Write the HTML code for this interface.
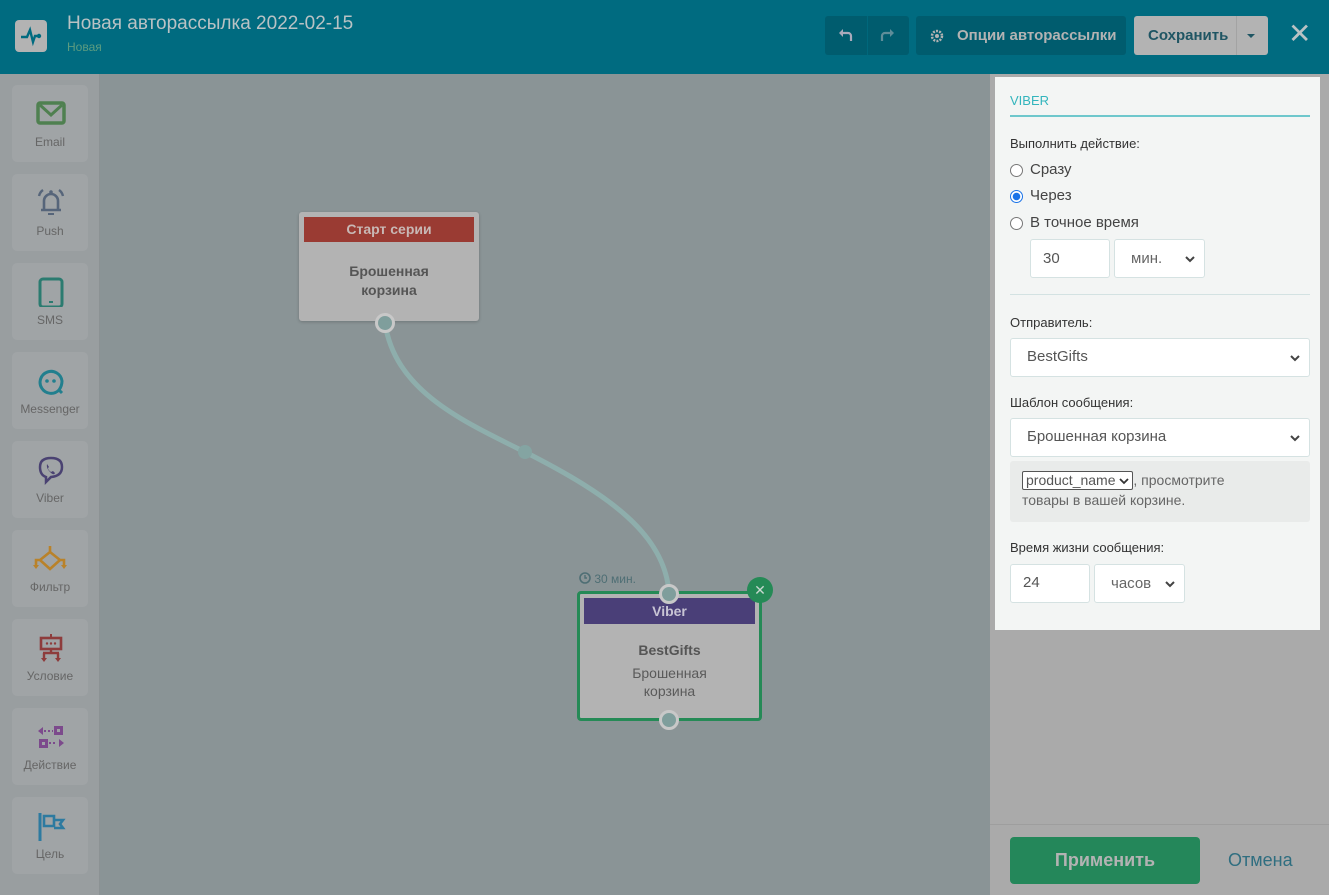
<!DOCTYPE html>
<html><head><meta charset="utf-8"><style>
*{box-sizing:border-box;margin:0;padding:0}
body{width:1329px;height:895px;overflow:hidden;font-family:"Liberation Sans","DejaVu Sans",sans-serif;background:#8a9496;position:relative}
.hdr{position:absolute;left:0;top:0;width:1329px;height:74px;background:#006b80}
.abs{position:absolute}
.tile{position:absolute;left:12px;width:76px;height:77px;background:#a0a4a6;border-radius:5px;text-align:center;font-size:12px;color:#666}
.tile svg{position:absolute;left:24px;top:14px}
.tile span{position:absolute;left:0;right:0;top:50px}
.lbl{position:absolute;left:1010px;font-size:13px;color:#333}
.radio{position:absolute;left:1010px;width:13px;height:13px;border:1px solid #777;border-radius:50%;background:#fff}
.rt{position:absolute;left:1030px;font-size:15px;color:#444}
.inp{position:absolute;background:#fff;border:1px solid #d5e2e2;border-radius:3px;font-size:15px;color:#555}
.chev{position:absolute;top:50%;margin-top:-4px}
</style></head><body>
<div class="hdr"></div>
<div class="abs" style="left:15px;top:20px;width:32px;height:32px;background:#b3b3b3;border-radius:4px">
<svg width="32" height="32"><path d="M6 17h6l3-7 3 12 2-6h4" stroke="#006b80" stroke-width="2.4" fill="none"/><circle cx="24" cy="16" r="2.2" fill="#006b80"/></svg></div>
<div class="abs" style="left:67px;top:13px;font-size:19px;color:#b9c2c4">Новая авторассылка 2022-02-15</div>
<div class="abs" style="left:67px;top:40px;font-size:12px;color:#5c9c80">Новая</div>
<div class="abs" style="left:825px;top:16px;width:84px;height:39px;background:#005c6e;border-radius:3px"></div>
<div class="abs" style="left:867px;top:16px;width:1px;height:39px;background:#00687c"></div>
<svg class="abs" style="left:838px;top:27px" width="16" height="16"><path d="M4 6h6a3 3 0 0 1 3 3v5" stroke="#aab" stroke-width="2.2" fill="none"/><path d="M1 6l4-4v8z" fill="#aab"/></svg>
<svg class="abs" style="left:879px;top:27px" width="16" height="16"><path d="M12 6H6a3 3 0 0 0-3 3v5" stroke="#5f8d99" stroke-width="2.2" fill="none"/><path d="M15 6l-4-4v8z" fill="#5f8d99"/></svg>
<div class="abs" style="left:916px;top:16px;width:210px;height:39px;background:#005c6e;border-radius:3px;color:#b3b3b3;font-weight:bold;font-size:15px;line-height:39px;padding-left:41px">Опции авторассылки</div>
<svg class="abs" style="left:929px;top:28px" width="16" height="16"><circle cx="8" cy="8" r="5" stroke="#b3b3b3" stroke-width="2.5" fill="none" stroke-dasharray="2 1.2"/><circle cx="8" cy="8" r="2" fill="#b3b3b3"/></svg>
<div class="abs" style="left:1134px;top:16px;width:134px;height:39px;background:#b3b3b3;border-radius:3px;color:#1f5563;font-weight:bold;font-size:15px;line-height:39px;padding-left:14px">Сохранить</div>
<div class="abs" style="left:1236px;top:16px;width:1px;height:39px;background:#a3a3a3"></div>
<div class="abs" style="left:1247px;top:34px;border:4px solid transparent;border-top:4px solid #1f5563"></div>
<div class="abs" style="left:1288px;top:17px;font-size:28px;color:#b9c2c4;font-weight:bold">✕</div>

<!-- left sidebar -->
<div class="abs" style="left:0;top:74px;width:100px;height:821px;background:#999ea0;border-right:1px solid #8c9294"></div>
<div class="tile" style="top:85px"><svg width="30" height="28"><rect x="2" y="4" width="26" height="20" rx="2" fill="none" stroke="#4f8050" stroke-width="3.5"/><path d="M4 6l11 10 11-10" fill="none" stroke="#4f8050" stroke-width="3"/></svg><span>Email</span></div>
<div class="tile" style="top:174px"><svg width="30" height="28"><path d="M8 22V13a7 7 0 0 1 14 0v9zM5 22h20" fill="none" stroke="#56657a" stroke-width="2.6"/><path d="M3 8q1-4 4-6M27 8q-1-4-4-6" fill="none" stroke="#56657a" stroke-width="2.4"/><circle cx="15" cy="4" r="1.8" fill="#56657a"/><path d="M12 26h6" stroke="#56657a" stroke-width="2"/></svg><span>Push</span></div>
<div class="tile" style="top:263px"><svg width="30" height="30"><rect x="4" y="2" width="22" height="28" rx="3" fill="none" stroke="#2b7b70" stroke-width="3"/><rect x="13" y="24" width="4" height="2" fill="#2b7b70"/></svg><span>SMS</span></div>
<div class="tile" style="top:352px"><svg width="30" height="30"><path d="M23 24A11 11 0 1 1 26 15q0 5-3 9l3 3" fill="none" stroke="#227f8e" stroke-width="3"/><circle cx="11" cy="15" r="1.8" fill="#227f8e"/><circle cx="18" cy="15" r="1.8" fill="#227f8e"/></svg><span>Messenger</span></div>
<div class="tile" style="top:441px"><svg width="30" height="32"><path d="M4 12q0-9 11-9t11 9-11 10l-5 5v-5q-6-2-6-10z" fill="none" stroke="#4a4272" stroke-width="2.5"/><path d="M11 9q-1 4 3 8t5 1l-2-2-2 1q-3-2-3-4l1-1z" fill="#4a4272"/></svg><span>Viber</span></div>
<div class="tile" style="top:530px"><svg width="36" height="30" style="left:20px"><path d="M18 2v6L8 16l10 9 10-9-10-8M8 16H4v6M28 16h4v6" fill="none" stroke="#b9822a" stroke-width="2.6"/><path d="M1 21h6l-3 4zM29 21h6l-3 4z" fill="#b9822a"/></svg><span>Фильтр</span></div>
<div class="tile" style="top:619px"><svg width="30" height="32"><path d="M15 1v4" stroke="#8e3c3c" stroke-width="2"/><rect x="5" y="5" width="20" height="11" fill="none" stroke="#8e3c3c" stroke-width="2.6"/><path d="M15 16v4M7 20h16M8 20v6M22 20v6" stroke="#8e3c3c" stroke-width="2.4" fill="none"/><circle cx="11" cy="10.5" r="1.2" fill="#8e3c3c"/><circle cx="15" cy="10.5" r="1.2" fill="#8e3c3c"/><circle cx="19" cy="10.5" r="1.2" fill="#8e3c3c"/><path d="M5 25h6l-3 4zM19 25h6l-3 4z" fill="#8e3c3c"/></svg><span>Условие</span></div>
<div class="tile" style="top:708px"><svg width="30" height="30"><path d="M2 9l5-4v8z" fill="#7c4a8c"/><rect x="18" y="4" width="9" height="9" fill="#7c4a8c"/><rect x="21" y="7" width="3" height="3" fill="#a0a4a6"/><rect x="3" y="17" width="9" height="9" fill="#7c4a8c"/><rect x="6" y="20" width="3" height="3" fill="#a0a4a6"/><path d="M28 21l-5-4v8z" fill="#7c4a8c"/><path d="M8 9h2M12 9h2M16 9h1M13 21h2M17 21h2" stroke="#7c4a8c" stroke-width="2"/></svg><span>Действие</span></div>
<div class="tile" style="top:797px"><svg width="30" height="30"><path d="M4 2v28" stroke="#2d7aa0" stroke-width="3"/><path d="M8 5h10v10H8zM18 9h9l-3 4 3 4h-9" fill="none" stroke="#2d7aa0" stroke-width="2.6"/></svg><span>Цель</span></div>

<!-- canvas -->
<svg class="abs" style="left:0;top:0" width="990" height="895">
<path d="M385 323 C395 390 460 420 525 452 C610 495 665 535 669 593" stroke="#8eaeac" stroke-width="5" fill="none"/>
<circle cx="525" cy="452" r="7" fill="#84a4a2"/>
</svg>
<div class="abs" style="left:299px;top:212px;width:180px;height:109px;background:#b3b3b3;border-radius:3px;box-shadow:0 1px 3px rgba(0,0,0,.2)">
<div style="margin:5px 5px 0;height:25px;background:#9a3b33;color:#c8b8b5;font-weight:bold;font-size:14px;text-align:center;line-height:25px">Старт серии</div>
<div style="text-align:center;font-weight:bold;font-size:14px;color:#555;margin-top:20px;line-height:19px">Брошенная<br>корзина</div></div>
<div class="abs" style="left:375px;top:313px;width:20px;height:20px;border-radius:50%;background:#7f9e9c;border:3px solid #c8c8c8"></div>

<div class="abs" style="left:579px;top:572px;font-size:12px;color:#4e6e74">
<svg width="12" height="12" style="vertical-align:-1px"><circle cx="6" cy="6" r="5" stroke="#4e6e74" stroke-width="1.6" fill="none"/><path d="M6 3v3h2" stroke="#4e6e74" stroke-width="1.4" fill="none"/></svg> 30 мин.</div>
<div class="abs" style="left:577px;top:591px;width:185px;height:130px;background:#b3b3b3;border:3px solid #258a56;border-radius:4px">
<div style="margin:4px 4px 0;height:26px;background:#4a3f78;color:#c8c4d4;font-weight:bold;font-size:14px;text-align:center;line-height:26px">Viber</div>
<div style="text-align:center;font-weight:bold;font-size:14px;color:#555;margin-top:18px">BestGifts</div>
<div style="text-align:center;font-size:14px;color:#5a5a5a;margin-top:6px;line-height:18px">Брошенная<br>корзина</div></div>
<div class="abs" style="left:747px;top:577px;width:26px;height:26px;border-radius:50%;background:#258a56;color:#c8d8d0;text-align:center;line-height:26px;font-size:14px;font-weight:bold">✕</div>
<div class="abs" style="left:659px;top:584px;width:20px;height:20px;border-radius:50%;background:#7f9e9c;border:3px solid #c8c8c8"></div>
<div class="abs" style="left:659px;top:710px;width:20px;height:20px;border-radius:50%;background:#7f9e9c;border:3px solid #c8c8c8"></div>

<!-- right panel -->
<div class="abs" style="left:990px;top:74px;width:339px;height:821px;background:#aaaaaa"></div>
<div class="abs" style="left:990px;top:824px;width:339px;height:1px;background:#9e9e9e"></div>
<div class="abs" style="left:995px;top:77px;width:325px;height:553px;background:#f3f5f4"></div>
<div class="abs" style="left:1010px;top:93px;font-size:13px;color:#33b5bd">VIBER</div>
<div class="abs" style="left:1010px;top:115px;width:300px;height:2px;background:#6ec7cc"></div>
<div class="lbl" style="top:136px">Выполнить действие:</div>
<div class="radio" style="top:164px"></div><div class="rt" style="top:161px">Сразу</div>
<div class="radio" style="top:190px;border-color:#1a73e8;background:radial-gradient(circle,#1a73e8 3.5px,#fff 4px)"></div><div class="rt" style="top:187px">Через</div>
<div class="radio" style="top:217px"></div><div class="rt" style="top:214px">В точное время</div>
<div class="inp" style="left:1030px;top:239px;width:80px;height:39px;padding:10px 12px">30</div>
<div class="inp" style="left:1114px;top:239px;width:91px;height:39px;padding:10px 16px;color:#666">мин.<svg class="chev" style="right:8px" width="12" height="8"><path d="M2 2l4 4 4-4" stroke="#444" stroke-width="2" fill="none"/></svg></div>
<div class="abs" style="left:1010px;top:294px;width:300px;height:1px;background:#d3e2e2"></div>
<div class="lbl" style="top:315px">Отправитель:</div>
<div class="inp" style="left:1010px;top:338px;width:300px;height:39px;padding:9px 16px">BestGifts<svg class="chev" style="right:8px" width="12" height="8"><path d="M2 2l4 4 4-4" stroke="#444" stroke-width="2" fill="none"/></svg></div>
<div class="lbl" style="top:395px">Шаблон сообщения:</div>
<div class="inp" style="left:1010px;top:418px;width:300px;height:39px;padding:9px 16px">Брошенная корзина<svg class="chev" style="right:8px" width="12" height="8"><path d="M2 2l4 4 4-4" stroke="#444" stroke-width="2" fill="none"/></svg></div>
<div class="abs" style="left:1010px;top:461px;width:300px;height:61px;background:#e9ebea;border-radius:3px;font-size:14px;color:#666;padding:9px 12px;line-height:20px">
<span style="display:inline-block;border:1px solid #555;background:#fff;height:19px;line-height:16px;padding:0 3px;color:#555;border-radius:2px">product_name <svg width="10" height="7"><path d="M1 1l4 4 4-4" stroke="#333" stroke-width="1.8" fill="none"/></svg></span>, просмотрите<br>товары в вашей корзине.</div>
<div class="lbl" style="top:540px">Время жизни сообщения:</div>
<div class="inp" style="left:1010px;top:564px;width:80px;height:39px;padding:9px 12px">24</div>
<div class="inp" style="left:1094px;top:564px;width:91px;height:39px;padding:10px 16px;color:#666">часов<svg class="chev" style="right:8px" width="12" height="8"><path d="M2 2l4 4 4-4" stroke="#444" stroke-width="2" fill="none"/></svg></div>
<div class="abs" style="left:1010px;top:837px;width:190px;height:47px;background:#24875a;border-radius:4px;color:#b3b3b3;font-weight:bold;font-size:18px;text-align:center;line-height:47px">Применить</div>
<div class="abs" style="left:1228px;top:850px;font-size:18px;color:#2f6e80">Отмена</div>
</body></html>
